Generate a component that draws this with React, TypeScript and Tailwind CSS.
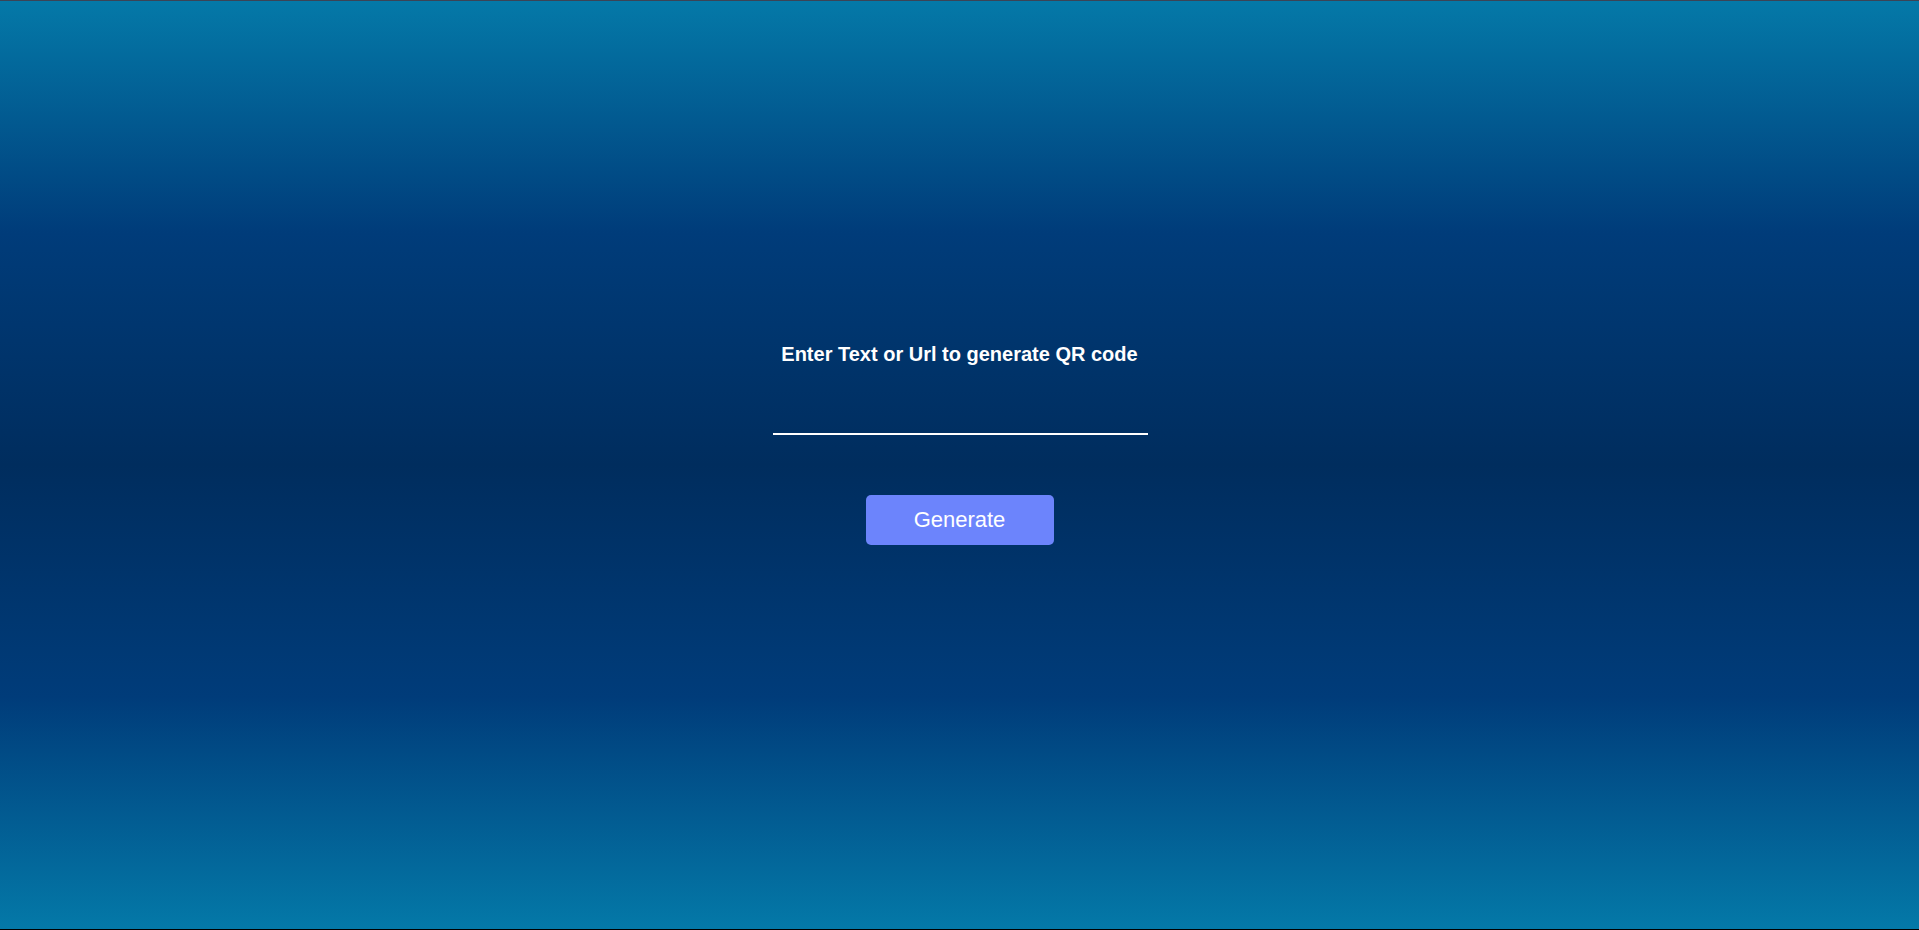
const App = () => {
  return (
    <div className="h-[930px] w-full overflow-hidden border-t border-t-[#3b4456] border-b border-b-black bg-[linear-gradient(to_bottom,#0479a8_0%,#003c7a_25%,#002d5e_50%,#003c7a_75%,#0479a8_100%)] font-['Liberation_Sans',Arial,sans-serif]">
      <div className="flex flex-col items-center pt-[342px]">
        <h3 className="text-[20px] font-bold leading-[23px] text-white">
          Enter Text or Url to generate QR code
        </h3>
        <input
          type="text"
          className="ml-[2px] mt-[29px] h-[40px] w-[375px] border-0 border-b-2 border-b-white bg-transparent px-2 text-lg text-white outline-none"
        />
        <button className="mt-[60px] h-[50px] w-[188px] rounded-[5px] bg-[#6c84fc] pb-[2px] text-[22px] text-white">
          Generate
        </button>
      </div>
    </div>
  );
};

export default App;
